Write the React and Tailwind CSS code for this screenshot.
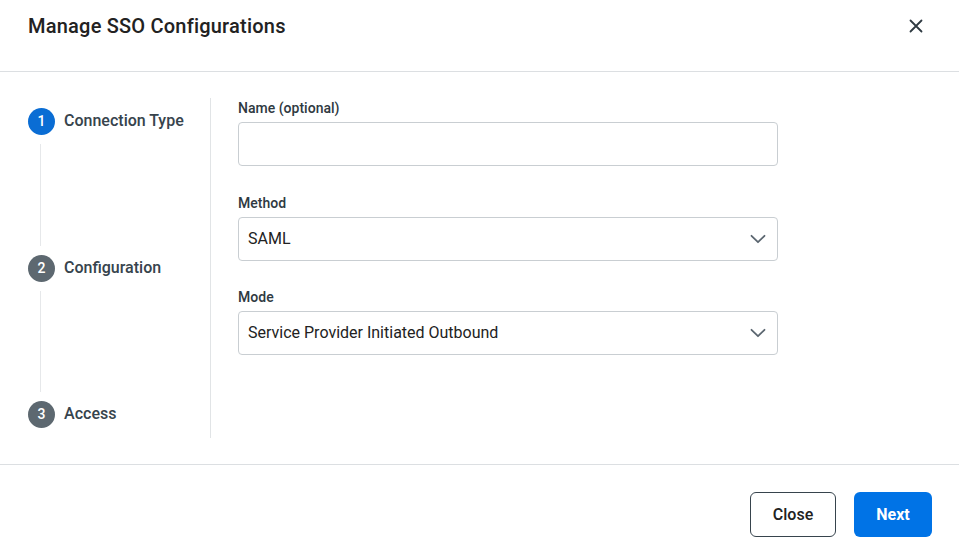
import React from 'react';

const steps = [
  { n: 1, label: 'Connection Type', active: true },
  { n: 2, label: 'Configuration' },
  { n: 3, label: 'Access' },
];

const Chevron = () => (
  <svg width="16" height="16" viewBox="0 0 16 16" fill="none" className="text-[#5b6670]">
    <path d="M1.5 4.8l6.5 6.4 6.5-6.4" stroke="currentColor" strokeWidth="1.8" strokeLinecap="round" strokeLinejoin="round" />
  </svg>
);

const Field = ({ label, value, select, className = '' }) => (
  <div className={className}>
    <label className="block text-[14px] leading-5 font-['Roboto_Medium','Roboto',sans-serif] text-[#2f3a42] mb-1">{label}</label>
    <div className="h-[44px] border border-[#c9ced2] rounded-[4px] flex items-center justify-between pl-[9px] pr-[11px]">
      <span className="text-[16px] text-[#222]">{value}</span>
      {select && <Chevron />}
    </div>
  </div>
);

const App = () => {
  return (
    <div className="w-[959px] h-[555px] bg-white font-['Roboto',sans-serif] flex flex-col">
      {/* Entête */}
      <div className="h-[72px] border-b border-[#dcdfe2] flex items-center justify-between pl-[28px] pr-[36px] pb-[1px]">
        <h1 className="text-[20px] font-['Roboto_Medium','Roboto',sans-serif] tracking-[0.2px] text-[#222] -mt-[19px]">Manage SSO Configurations</h1>
        <button className="text-[#2f3a42] -mt-[19px]">
          <svg width="14" height="14" viewBox="0 0 14 14">
            <path d="M1.5 1.5l11 11M12.5 1.5l-11 11" stroke="currentColor" strokeWidth="1.8" strokeLinecap="round" />
          </svg>
        </button>
      </div>

      {/* Corps */}
      <div className="flex pt-[26px] pb-[26px] h-[392px]">
        <div className="w-[211px] pl-[28px] border-r border-[#e1e4e6] pt-[10px]">
          {steps.map((s, i) => (
            <div key={s.n}>
              <div className="flex items-center h-[27px]">
                <div className={`w-[27px] h-[27px] rounded-full flex items-center justify-center text-white text-[14px] font-['Roboto_Medium','Roboto',sans-serif] ${s.active ? 'bg-[#0a6dd4]' : 'bg-[#5d6870]'}`}>
                  {s.n}
                </div>
                <span className="ml-[9px] text-[16px] font-['Roboto_Medium','Roboto',sans-serif] text-[#37444d] -mt-[2px]">{s.label}</span>
              </div>
              {i < steps.length - 1 && (
                <div className={`w-[13px] border-r border-[#e6e8ea] my-[9px] ${i === 0 ? 'h-[102px]' : 'h-[101px]'}`} />
              )}
            </div>
          ))}
        </div>

        <div className="pl-[27px] w-[567px]">
          <Field label="Name (optional)" value="" />
          <Field label="Method" value="SAML" select className="mt-[27px]" />
          <Field label="Mode" value="Service Provider Initiated Outbound" select className="mt-[26px]" />
        </div>
      </div>

      {/* Pied */}
      <div className="border-t border-[#dcdfe2] flex justify-end gap-[18px] pr-[27px] pt-[27px]">
        <button className="w-[86px] h-[45px] rounded-[6px] border border-[#37444d] text-[16px] font-['Roboto_Medium','Roboto',sans-serif] text-[#222]">Close</button>
        <button className="w-[78px] h-[45px] rounded-[6px] bg-[#0073e6] text-[16px] font-bold text-white">Next</button>
      </div>
    </div>
  );
};

export default App;
